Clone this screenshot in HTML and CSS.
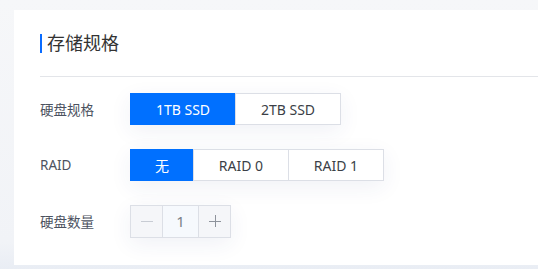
FILE: index.html
```html
<!DOCTYPE html>
<html lang="zh">
<head>
<meta charset="utf-8">
<link rel="stylesheet" href="styles.css">
</head>
<body>
<div class="page">
  <section class="card">
    <header class="card-head">
      <h2 class="title">存储规格</h2>
    </header>
    <div class="form">
      <div class="row">
        <span class="label">硬盘规格</span>
        <div class="group">
          <button class="opt w105 on">1TB SSD</button>
          <button class="opt w105">2TB SSD</button>
        </div>
      </div>
      <div class="row">
        <span class="label">RAID</span>
        <div class="group">
          <button class="opt w63 on">无</button>
          <button class="opt w95">RAID 0</button>
          <button class="opt w95">RAID 1</button>
        </div>
      </div>
      <div class="row">
        <span class="label">硬盘数量</span>
        <div class="group stepper">
          <span class="step">
            <svg width="12" height="12" viewBox="0 0 12 12"><path d="M0 6.5h12" stroke="#c8ccd4" stroke-width="1"/></svg>
          </span>
          <span class="num">1</span>
          <span class="step">
            <svg width="12" height="12" viewBox="0 0 12 12"><path d="M0 6.5h12M6.5 0v12" stroke="#8e939c" stroke-width="1"/></svg>
          </span>
        </div>
      </div>
    </div>
  </section>
</div>
</body>
</html>
```
FILE: styles.css
```css
* { box-sizing: border-box; }
html, body {
  margin: 0;
  padding: 0;
  overflow: hidden;
  background: #f4f5f8;
  font-family: "Noto Sans", "Noto Sans CJK SC", sans-serif;
}
.page {
  padding: 10px 0 0 14px;
  height: 269px;
  background: linear-gradient(#f6f7f9, #f1f3f7 90%, #e9edf4);
}
.card {
  background: #fff;
  height: 255px;
  padding-left: 26px;
}
.card-head {
  height: 67px;
  border-bottom: 1px solid #e3e5e9;
  display: flex;
  align-items: center;
}
.title {
  margin: 0;
  font-size: 18px;
  font-weight: 400;
  color: #333;
  line-height: 19px;
  border-left: 2px solid #0a6cff;
  padding-left: 5px;
}
.form {
  padding-top: 16px;
  display: flex;
  flex-direction: column;
  gap: 24px;
}
.row {
  display: flex;
  align-items: center;
  height: 32px;
}
.label {
  width: 90px;
  font-size: 13.5px;
  color: #4c5260;
}
.group {
  display: flex;
  box-shadow: 0 6px 22px rgba(40, 60, 130, 0.07);
}
.opt {
  height: 32px;
  padding: 0;
  margin: 0 0 0 -1px;
  border: 1px solid #dcdfe6;
  background: #fff;
  color: #3b3f47;
  font-family: inherit;
  font-size: 14px;
  cursor: pointer;
}
.opt:first-child { margin-left: 0; }
.opt.w105 { width: 106px; }
.opt.w63 { width: 64px; }
.opt.w95 { width: 96px; }
.opt.on {
  background: #0070ff;
  border-color: #0070ff;
  color: #fff;
}
.stepper { height: 33px; }
.step, .num {
  height: 33px;
  display: flex;
  align-items: center;
  justify-content: center;
  border: 1px solid #dcdfe6;
  background: #f5f6f9;
}
.step { width: 33px; }
.step + .num, .num + .step { margin-left: -1px; }
.num {
  width: 37px;
  background: #f6f9fd;
  color: #7a7f88;
  font-size: 15px;
}
```
